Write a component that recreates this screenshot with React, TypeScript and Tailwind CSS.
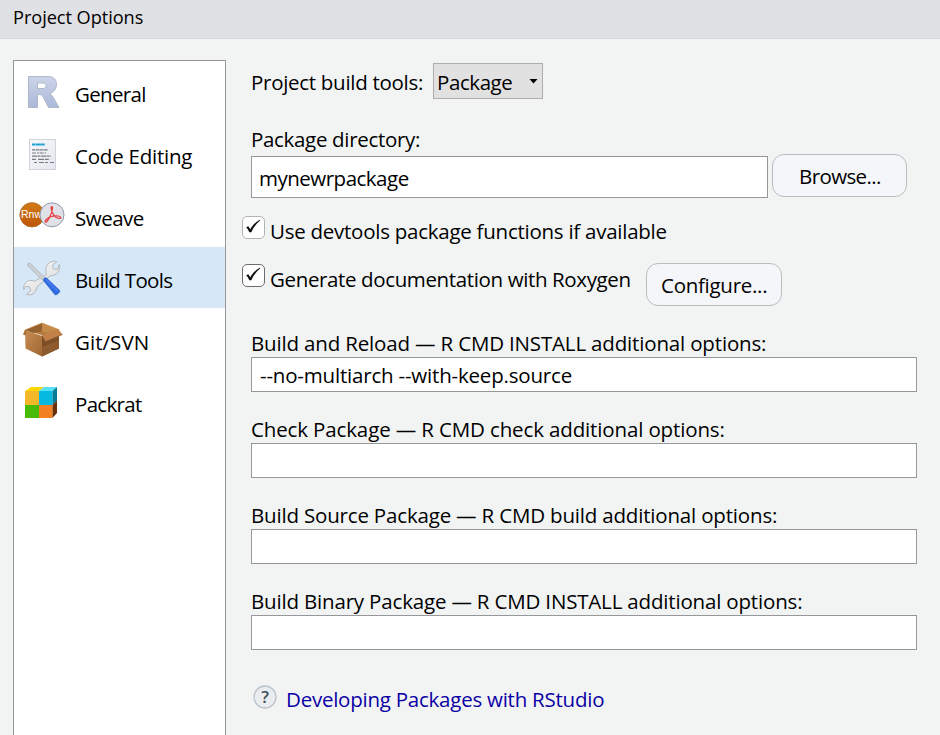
import type { ReactNode } from "react";

function RLogo() {
  return (
    <svg width="46" height="40" viewBox="0 0 46 40">
      <defs>
        <linearGradient id="r" x1="0" y1="0" x2="0" y2="1">
          <stop offset="0" stopColor="#ccd4e8" />
          <stop offset="1" stopColor="#abb8d9" />
        </linearGradient>
      </defs>
      <path
        d="M9.500 3.500H29C35.500 3.500 37.500 7.500 37.500 11.500C37.500 16.500 34.500 19.500 30.500 20.500C32 21.200 33 22.500 34 24L40 34.500H29.500L24.500 24.500C23.300 22.300 22 21.500 20 21.500H18.500V34.500H9.500ZM18.500 10V15.500H24C28 15.500 28 10 24 10Z"
        fill="url(#r)"
        fillRule="evenodd"
        stroke="#a9b2c4"
        strokeWidth="0.9"
      />
    </svg>
  );
}

function CodeIcon() {
  return (
    <svg width="46" height="40" viewBox="0 0 46 40">
      <defs>
        <linearGradient id="paper" x1="0" y1="0" x2="1" y2="1">
          <stop offset="0" stopColor="#f7f8fa" />
          <stop offset="1" stopColor="#e3e7ee" />
        </linearGradient>
      </defs>
      <rect x="10.500" y="4.500" width="26" height="30" fill="url(#paper)" stroke="#d0d3d8" />
      <path d="M13 9.500H26" stroke="#1ba0d2" strokeWidth="1.800" strokeDasharray="3.500 .4 5 .3" />
      <g stroke="#777c84" strokeWidth="1.200">
        <path d="M13 14.800H29" strokeDasharray="3 .5 4 .4" />
        <path d="M13 18H27" strokeDasharray="4 1 2 .6" />
        <path d="M13 21.200H32" strokeDasharray="5 .5 3 .7" />
        <path d="M13 24.300H32" strokeDasharray="4 2 6 .8" />
        <path d="M15 27.500H35" strokeDasharray="3 2 5 1" />
      </g>
    </svg>
  );
}

function SweaveIcon() {
  return (
    <svg width="46" height="40" viewBox="0 0 46 40">
      <defs>
        <linearGradient id="rnw" x1="0" y1="0" x2="0" y2="1">
          <stop offset="0" stopColor="#d37b17" />
          <stop offset="1" stopColor="#bd5607" />
        </linearGradient>
      </defs>
      <circle cx="13" cy="17.800" r="12.200" fill="url(#rnw)" stroke="#a8652a" strokeWidth="0.700" />
      <text x="2" y="21.300" fontSize="10.500" fill="#fff" fontFamily="Liberation Sans, sans-serif">Rnw</text>
      <circle cx="33" cy="17.800" r="12" fill="#dfe1e7" stroke="#8290a3" strokeWidth="0.900" />
      <path
        d="M32.800 9.500C31.500 9.500 32.300 13 33.600 16C34.800 18.700 37.500 21.300 40.500 21.300C42.500 21.300 42 19.200 39 19C34.500 18.700 29.500 20.300 27.500 22.300C25.500 24.200 26 26.200 27.700 24.700C29.500 23 32.500 17 33.200 13C33.600 10.800 33.500 9.500 32.800 9.500Z"
        fill="none"
        stroke="#e8383a"
        strokeWidth="1.200"
      />
    </svg>
  );
}

function ToolsIcon() {
  return (
    <svg width="46" height="40" viewBox="0 0 46 40">
      <defs>
        <linearGradient id="steel" x1="0" y1="0" x2="1" y2="1">
          <stop offset="0" stopColor="#ffffff" />
          <stop offset="1" stopColor="#d2d3d5" />
        </linearGradient>
      </defs>
      <path
        d="M27.500 15.500C25.500 10.500 27.500 4.500 32 2.800C34 2 36.200 2 37.800 2.700L33.300 6.300L34.600 10L38.500 10.300L40.300 5.500C41.800 9.500 39.500 14.500 35.500 16C33.500 16.700 31.700 16.500 30.300 17.500L18 28C17.700 30.500 16.500 34 13 35.400C11 36.200 8.800 35.900 7.500 35.200L11.800 31.500L10.500 27.800L6.700 27.400L4.800 30.500C4 26.500 6.300 22.500 10.500 21.500C12.700 21 14 22.200 15.500 22.200Z"
        fill="url(#steel)"
        stroke="#a9abaf"
        strokeWidth="0.800"
      />
      <path d="M9 4.500L10.800 4L26 18.700L23.500 21.200L8.500 6.500Z" fill="#cdd0d3" stroke="#a0a6ab" strokeWidth="0.600" />
      <path d="M24.500 21.500C24.300 19.700 26 18.300 27.500 19L40.800 31.500C41 33.500 38 36.200 36 35.800Z" fill="#2f69e0" stroke="#2a60cc" strokeWidth="0.700" />
      <path d="M27 20.500L38.500 32" stroke="#4a80f0" strokeWidth="1.500" />
    </svg>
  );
}

function BoxIcon() {
  return (
    <svg width="46" height="40" viewBox="0 0 46 40">
      <defs>
        <linearGradient id="boxl" x1="0" y1="0" x2="1" y2="1">
          <stop offset="0" stopColor="#c98e53" />
          <stop offset="1" stopColor="#9d6633" />
        </linearGradient>
      </defs>
      <path d="M6 9L23 2L41 9L24 14.500Z" fill="#b57a3c" />
      <path d="M23 2V10.500L14 12L6 9Z" fill="#95622f" />
      <path d="M23 2V10.500L32 12L40 9Z" fill="#c68b49" />
      <path d="M6 9L23 15V35.500L6.500 27.500Z" fill="url(#boxl)" />
      <path d="M23 15L40 9V27.500L23 35.500Z" fill="#7e4e26" />
      <path d="M23 35.500V26L40 19.500V27.500Z" fill="#8e5b2e" />
      <path d="M6 8.500L4 13.500L6.500 14.500L7.500 9.500Z" fill="#a96f39" />
      <path d="M23 14.500L39.500 8.500L43.500 13.500L26.500 20.500Z" fill="#c18148" />
      <path d="M23 14.500L26.500 20.500L43.500 13.500" fill="none" stroke="#935d2d" strokeWidth="0.800" />
      <path d="M6 9L23 2L40 8.500" fill="none" stroke="#d19a5c" strokeWidth="0.700" />
    </svg>
  );
}

function PackratIcon() {
  return (
    <svg width="46" height="40" viewBox="0 0 46 40">
      <path d="M6 8L12 4H25L20 8Z" fill="#ffd500" />
      <path d="M20 8L25 4H38L33.500 8Z" fill="#55e1f8" />
      <rect x="6" y="8" width="14" height="14" fill="#f3b72a" />
      <rect x="20" y="8" width="13.500" height="14" fill="#05b9df" />
      <rect x="6" y="22" width="14" height="13" fill="#48bb08" />
      <rect x="20" y="22" width="13.500" height="13" fill="#f48024" />
      <path d="M33.500 8L38 4V17.500L33.500 22Z" fill="#047c98" />
      <path d="M33.500 22L38 17.500V30L33.500 35Z" fill="#6a3008" />
    </svg>
  );
}

const sections: { name: string; icon: ReactNode; tracking: string; active?: boolean }[] = [
  { name: "General", icon: <RLogo />, tracking: "tracking-[-0.68px]" },
  { name: "Code Editing", icon: <CodeIcon />, tracking: "tracking-[-0.22px]" },
  { name: "Sweave", icon: <SweaveIcon />, tracking: "tracking-[-0.5px]" },
  { name: "Build Tools", icon: <ToolsIcon />, tracking: "tracking-[-0.7px]", active: true },
  { name: "Git/SVN", icon: <BoxIcon />, tracking: "tracking-[0.05px]" },
  { name: "Packrat", icon: <PackratIcon />, tracking: "tracking-[-0.7px]" },
];

const options = [
  { label: "Build and Reload — R CMD INSTALL additional options:", value: "--no-multiarch --with-keep.source", tracking: "tracking-[-0.165px]" },
  { label: "Check Package — R CMD check additional options:", value: "", tracking: "tracking-[-0.135px]" },
  { label: "Build Source Package — R CMD build additional options:", value: "", tracking: "tracking-[-0.18px]" },
  { label: "Build Binary Package — R CMD INSTALL additional options:", value: "", tracking: "tracking-[-0.175px]" },
];

function Check({ border }: { border: string }) {
  return (
    <span className={`flex h-[23px] w-[23px] shrink-0 rounded-[5px] border bg-white ${border}`}>
      <svg width="21" height="21" viewBox="0 0 21 21">
        <path d="M3.200 10.200L5.300 9.300L7.300 12.300C9.500 8.500 12.500 5 16.800 2.700L17.300 3.300C13.500 6.500 10.500 10.300 8.300 15.300H6.300C5.500 13.200 4.500 11.500 3.200 10.200Z" fill="#111" />
      </svg>
    </span>
  );
}

export default function App() {
  return (
    <div className="flex h-[735px] w-[940px] flex-col overflow-hidden bg-[#f2f4f4] font-['Open_Sans','Noto_Sans',sans-serif] text-[20.5px] leading-7 whitespace-nowrap text-black">
      <header className="h-[39px] shrink-0 border-b border-[#d7d9dd] bg-[#e0e1e5] pt-[3px] pl-[13px] text-[18.2px] tracking-[-0.06px]">
        Project Options
      </header>
      <div className="flex min-h-0 flex-1">
        <nav className="mt-[21px] ml-[13px] flex w-[213px] shrink-0 flex-col gap-px border border-b-0 border-[#959798] bg-white">
          {sections.map((s) => (
            <div key={s.name} className={`flex h-[61px] shrink-0 pl-[5px] ${s.active ? "bg-[#d6e8f7]" : ""}`}>
              <div className="mt-3 w-[56px]">{s.icon}</div>
              <span className={`mt-[19px] ${s.tracking}`}>{s.name}</span>
            </div>
          ))}
        </nav>
        <main className="ml-[25px] flex w-[666px] flex-col">
          <div className="mt-[24px] flex h-9 items-start">
            <span className="mt-[5px] w-[182px] tracking-[-0.29px]">Project build tools:</span>
            <div className="flex h-9 w-[110px] items-start border border-[#adadad] bg-[#e1e1e1] pl-[3px]">
              <span className="mt-1 w-[92px] tracking-[-0.42px]">Package</span>
              <svg className="mt-[15px]" width="9" height="5" viewBox="0 0 9 5">
                <path d="M0.500 0H8.500L4.500 4.500Z" fill="#000" />
              </svg>
            </div>
          </div>
          <div className="mt-[26px] h-7 tracking-[-0.32px]">Package directory:</div>
          <div className="mt-px flex h-[44px] items-start gap-1">
            <div className="mt-[2px] h-[42px] w-[517px] shrink-0 border border-[#959798] bg-white pt-[7px] pl-[7px] tracking-[-0.5px]">
              mynewrpackage
            </div>
            <div className="h-[43px] w-[135px] shrink-0 rounded-[12px] border border-[#bcbcbe] bg-[#f5f6f9] pt-[7px] pl-[26px] tracking-[-0.6px]">
              Browse...
            </div>
          </div>
          <div className="mt-[18px] -ml-[9px] flex h-[29px] items-start gap-[5px]">
            <Check border="border-[#b3b3b4]" />
            <span className="mt-px tracking-[-0.255px]">Use devtools package functions if available</span>
          </div>
          <div className="mt-[18px] -ml-[9px] flex h-[43px] items-start">
            <div className="mt-px">
              <Check border="border-[#6c6d6e]" />
            </div>
            <span className="mt-[2px] ml-[5px] w-[376px] tracking-[-0.37px]">Generate documentation with Roxygen</span>
            <div className="h-[43px] w-[136px] shrink-0 rounded-[12px] border border-[#bcbcbe] bg-[#f5f6f9] pt-[7px] pl-[14px] tracking-[-0.28px]">
              Configure...
            </div>
          </div>
          <div className="mt-[23px] flex flex-col gap-[23px]">
            {options.map((o) => (
              <div key={o.label}>
                <div className={`h-7 ${o.tracking}`}>{o.label}</div>
                <div className="h-[35px] border border-[#959798] bg-white pt-[3px] pl-2 tracking-[-0.19px]">{o.value}</div>
              </div>
            ))}
          </div>
          <div className="mt-[35px] flex items-start">
            <svg className="ml-[2px]" width="24" height="24" viewBox="0 0 24 24">
              <circle cx="12" cy="12" r="11" fill="#e9edf0" stroke="#bac4ca" strokeWidth="1.300" />
              <text x="12" y="17.700" textAnchor="middle" fontSize="17" fontWeight="600" fill="#42505b">?</text>
            </svg>
            <span className="ml-[9px] tracking-[-0.24px] text-[#0a00a5]">Developing Packages with RStudio</span>
          </div>
        </main>
      </div>
    </div>
  );
}
